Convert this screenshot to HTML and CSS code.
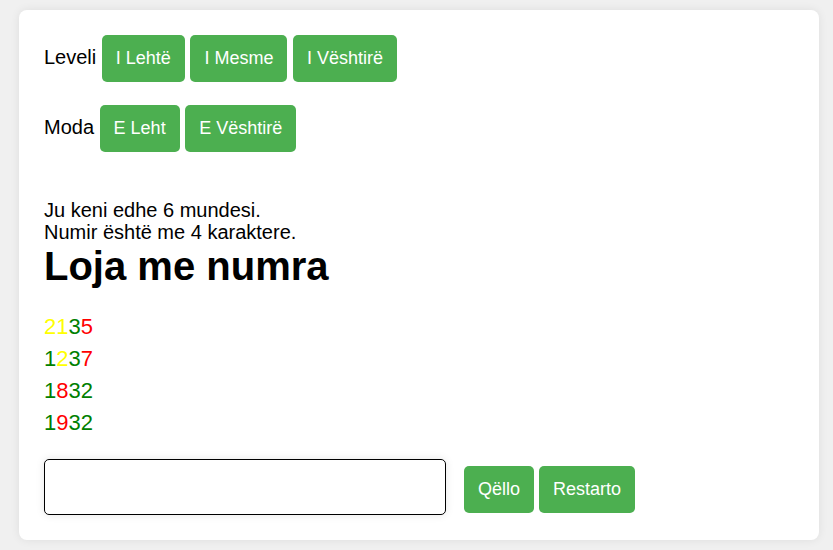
FILE: index.html
```html
<!DOCTYPE html>
<html lang="sq">
<head>
<meta charset="utf-8">
<title>Loja me numra</title>
<link rel="stylesheet" href="styles.css">
</head>
<body>
<div class="card">
  <div class="row">Leveli <button class="btn">I Lehtë</button> <button class="btn">I Mesme</button> <button class="btn">I Vështirë</button></div>
  <div class="row">Moda <button class="btn">E Leht</button> <button class="btn">E Vështirë</button></div>
  <div class="info">
    <div>Ju keni edhe 6 mundesi.</div>
    <div>Numir është me 4 karaktere.</div>
  </div>
  <h1 class="title">Loja me numra</h1>
  <div class="guesses">
    <div class="guess"><span class="y">2</span><span class="y">1</span><span class="g">3</span><span class="r">5</span></div>
    <div class="guess"><span class="g">1</span><span class="y">2</span><span class="g">3</span><span class="r">7</span></div>
    <div class="guess"><span class="g">1</span><span class="r">8</span><span class="g">3</span><span class="g">2</span></div>
    <div class="guess"><span class="g">1</span><span class="r">9</span><span class="g">3</span><span class="g">2</span></div>
  </div>
  <div class="controls">
    <input class="field" type="text">
    <div class="actions">
      <button class="btn">Qëllo</button>
      <button class="btn">Restarto</button>
    </div>
  </div>
</div>
</body>
</html>
```
FILE: styles.css
```css
html, body {
  margin: 0;
  padding: 0;
}
body {
  background: #f0f0f0;
  font-family: "Liberation Sans", Arial, sans-serif;
  font-size: 20px;
  color: #000;
  padding: 10px 14px 10px 19px;
}
.card {
  box-sizing: border-box;
  width: 800px;
  height: 530px;
  background: #fff;
  border-radius: 8px;
  box-shadow: 0 0 10px rgba(0, 0, 0, 0.08);
  padding: 25px;
}
.row {
  margin-bottom: 23px;
  white-space: nowrap;
}
.btn {
  display: inline-block;
  margin: 0;
  background: #4caf50;
  color: #fff;
  border: none;
  border-radius: 5px;
  padding: 13px 14px;
  font-family: "Liberation Sans", Arial, sans-serif;
  font-size: 18px;
  cursor: pointer;
}
.info {
  margin-top: 47px;
  line-height: 22px;
}
.title {
  margin: 0 0 22px;
  font-size: 40px;
  line-height: 46px;
  font-weight: bold;
}
.guesses {
  margin-bottom: 20px;
}
.guess {
  font-size: 22px;
  line-height: 32px;
}
.y { color: #ffff00; }
.g { color: #008000; }
.r { color: #ff0000; }
.controls {
  display: flex;
  align-items: flex-start;
}
.field {
  box-sizing: border-box;
  width: 402px;
  height: 56px;
  margin: 0;
  border: 1px solid #000;
  border-radius: 5px;
  box-shadow: 0 0 8px rgba(0, 0, 0, 0.1);
  font-size: 20px;
  padding: 0 10px;
}
.actions {
  display: flex;
  gap: 5px;
  margin-left: 18px;
  margin-top: 7px;
}
```
